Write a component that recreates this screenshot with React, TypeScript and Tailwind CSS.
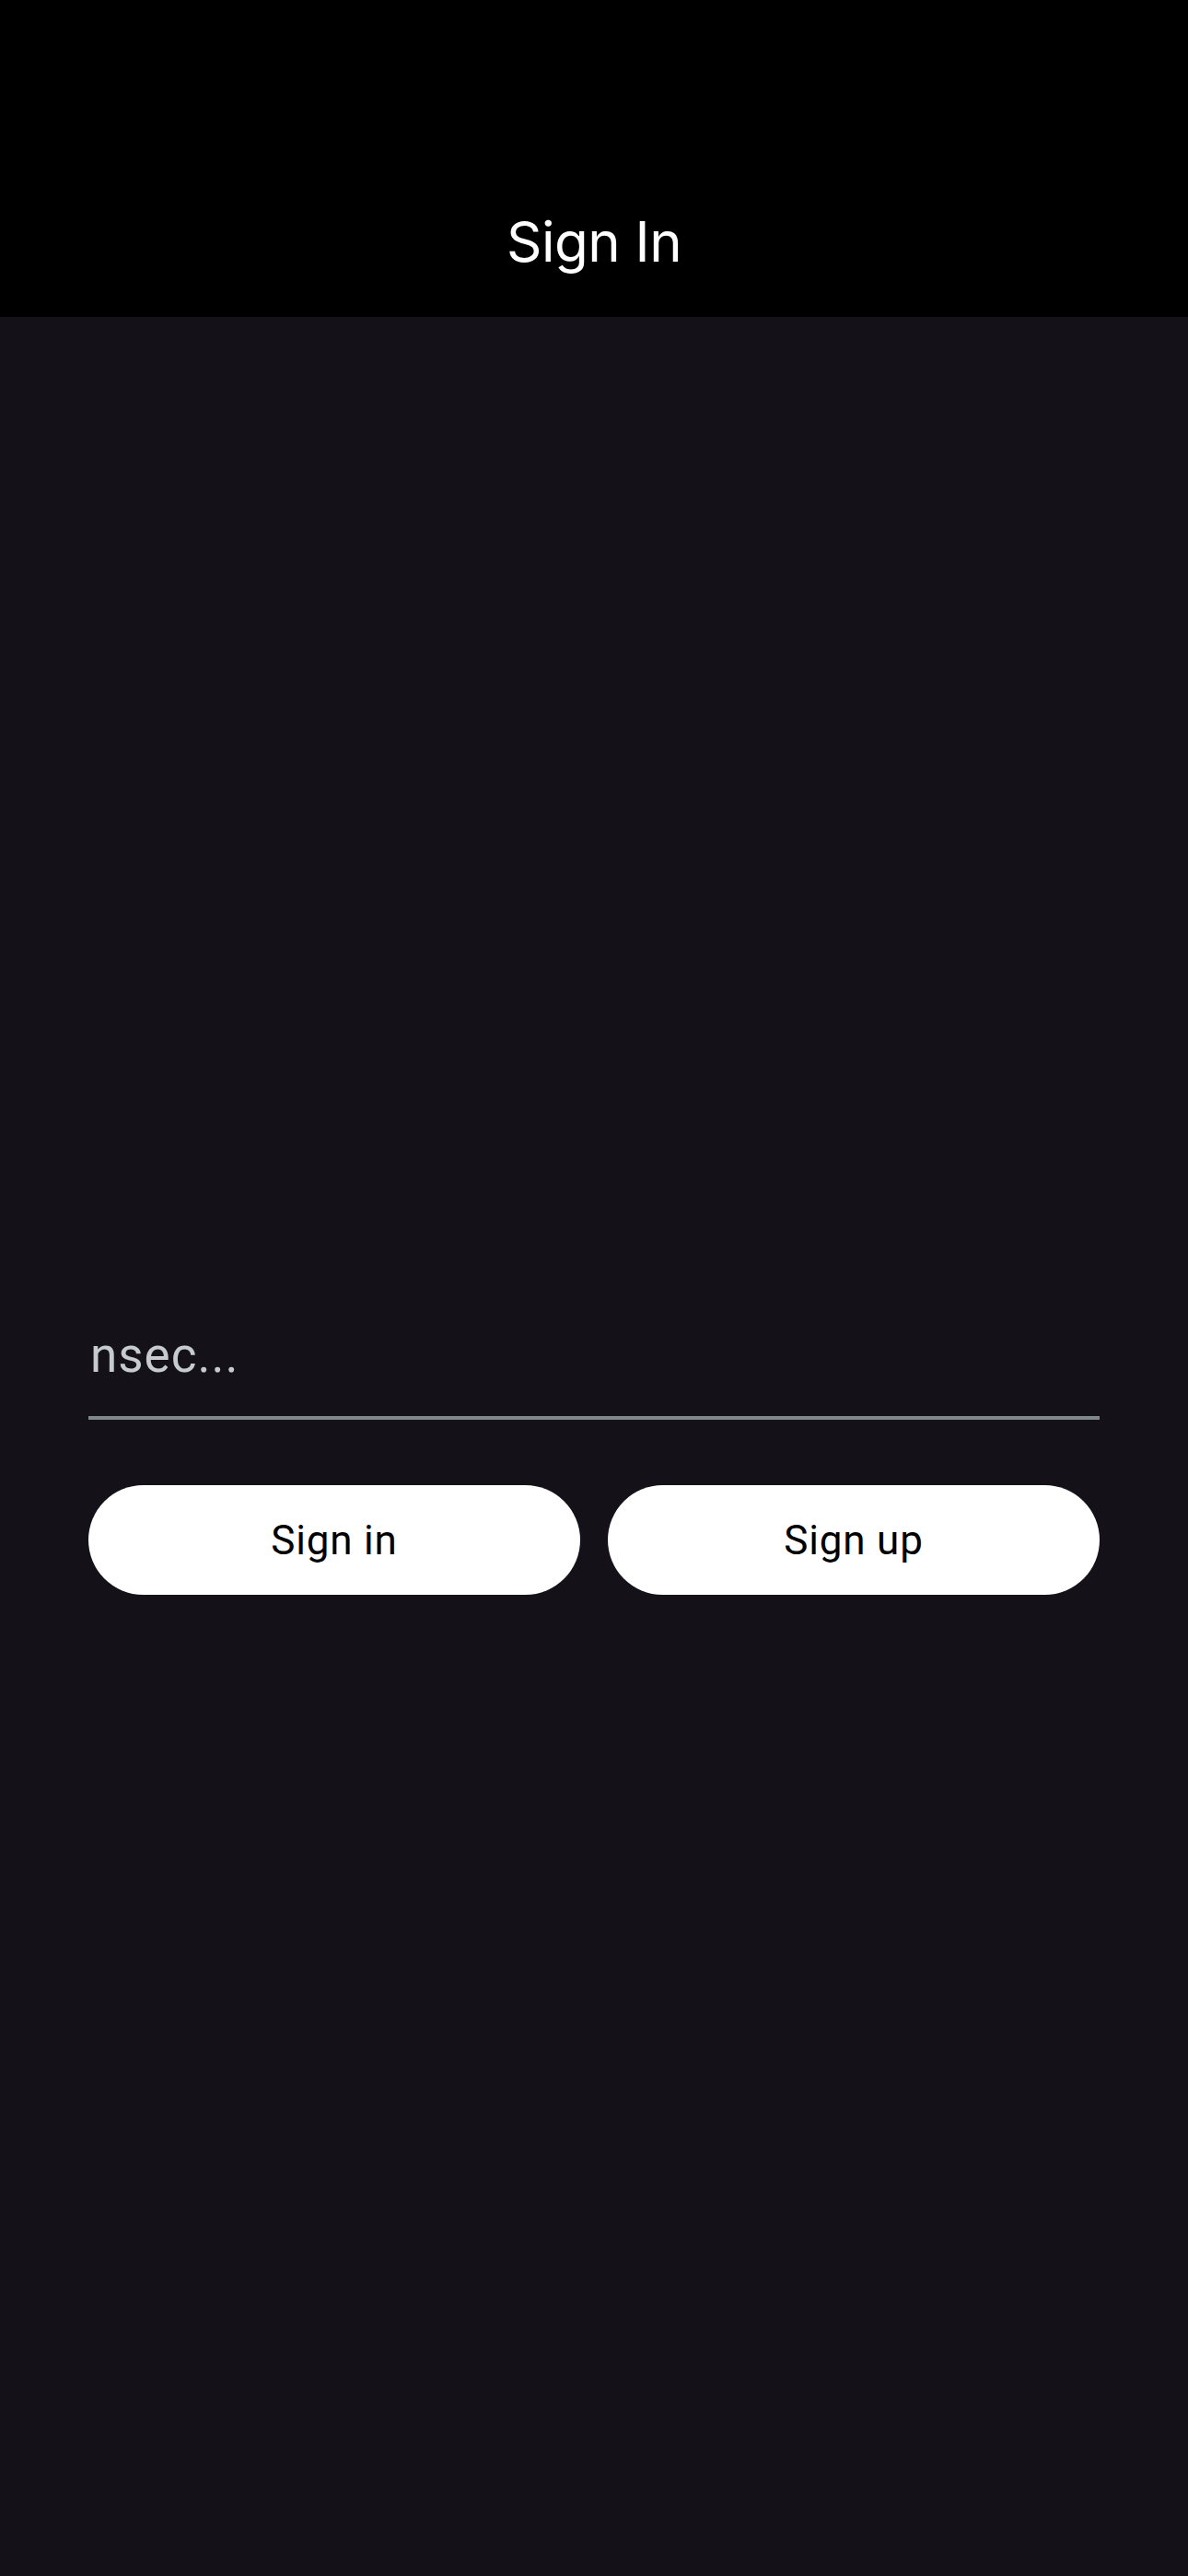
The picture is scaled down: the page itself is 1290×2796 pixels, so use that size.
import React, { useState } from "react";

const App = (): JSX.Element => {
  const [key, setKey] = useState("");

  return (
    <div className="w-[1290px] min-h-[2796px] flex flex-col bg-[#141218]">
      <header className="h-[344px] shrink-0 bg-black flex justify-center pt-[226px]">
        <h1 className="text-white text-[60px] leading-[72px] font-normal tracking-[-0.5px] font-['Inter',sans-serif]">
          Sign In
        </h1>
      </header>

      <main className="flex-1 flex flex-col px-[96px] pt-[1089px]">
        <div className="border-b-[4px] border-[#7f898b] pb-[28px]">
          <input
            value={key}
            onChange={(e) => setKey(e.target.value)}
            placeholder="nsec..."
            className="w-full bg-transparent outline-none text-[53px] leading-[76px] tracking-[1px] text-[#e6e8ea] placeholder:text-[#c5cbce] font-['Roboto',sans-serif] pl-[2px]"
          />
        </div>

        <div className="grid grid-cols-2 gap-[30px] mt-[71px]">
          <button className="h-[119px] rounded-full bg-white text-black text-[44px] font-['Roboto',sans-serif] tracking-[0.8px]">
            Sign in
          </button>
          <button className="h-[119px] rounded-full bg-white text-black text-[44px] font-['Roboto',sans-serif] tracking-[0.8px]">
            Sign up
          </button>
        </div>
      </main>
    </div>
  );
};

export default App;
